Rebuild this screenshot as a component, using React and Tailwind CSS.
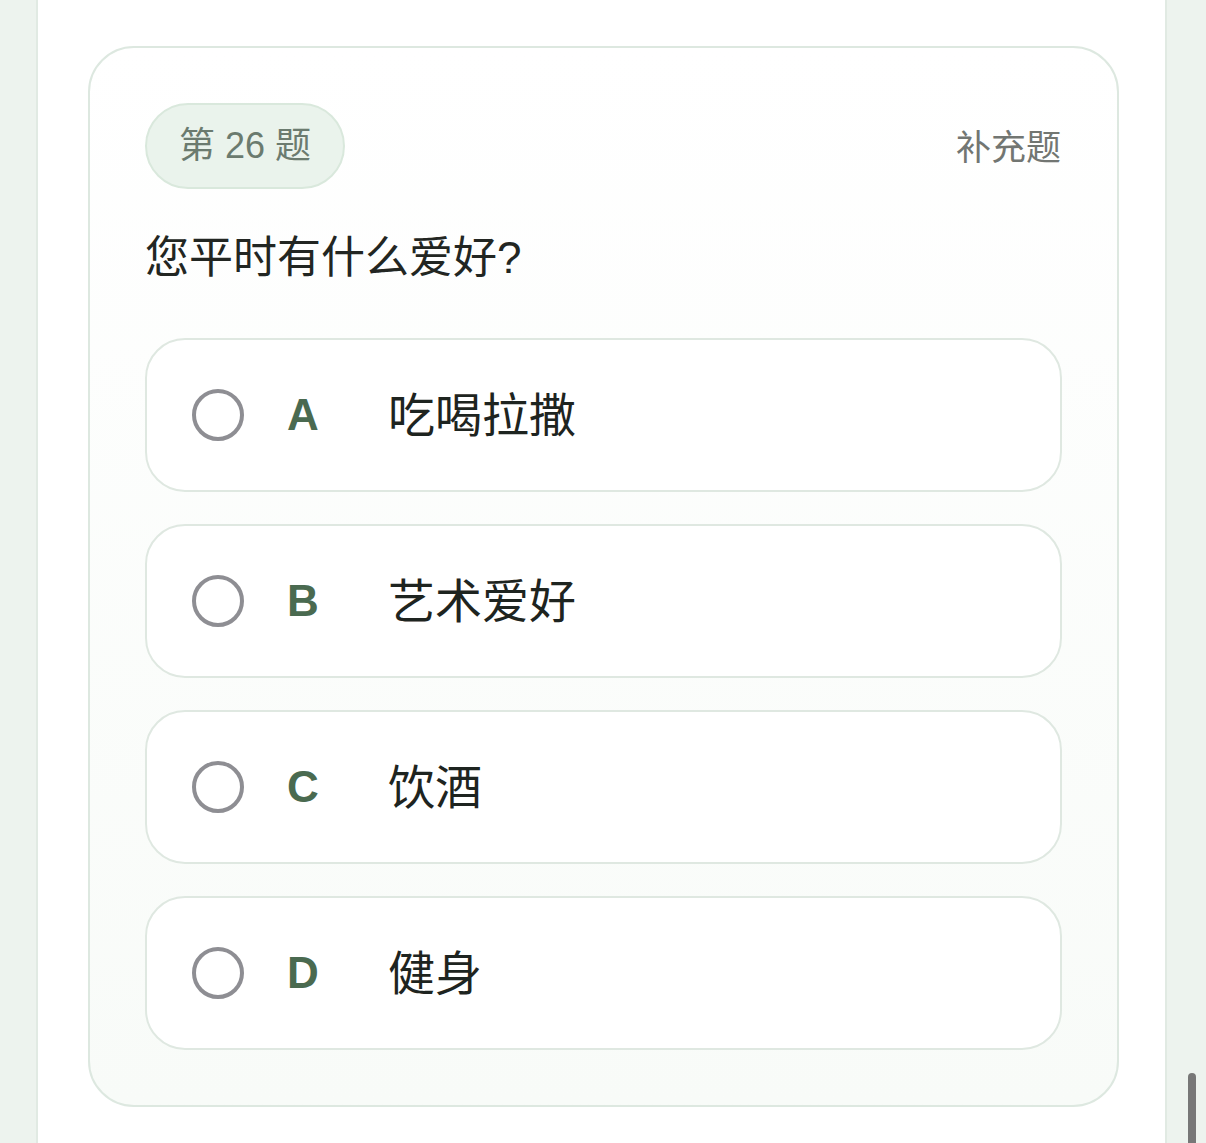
import React from "react";

const options = [
  { key: "A", label: "吃喝拉撒" },
  { key: "B", label: "艺术爱好" },
  { key: "C", label: "饮酒" },
  { key: "D", label: "健身" },
];

/* ─── Option Row ─────────────────────────────────────────────── */
function OptionRow({ letter, label }) {
  return (
    <div className="h-[154px] bg-white rounded-[40px] border-2 border-[#dfe8e1] flex items-center pl-[45px]">
      <span className="w-[52px] h-[52px] rounded-full border-[4px] border-[#8e8e93] shrink-0" />
      <span className="ml-[43px] w-[101px] shrink-0 text-[44px] font-bold leading-none text-[#4a6a50]">
        {letter}
      </span>
      <span className="text-[47px] leading-none text-[#1e2420]">{label}</span>
    </div>
  );
}

/* ─── Page ───────────────────────────────────────────────────── */
export default function App() {
  return (
    <div
      className="relative min-h-screen h-[1143px] overflow-hidden bg-[#edf3ee] pl-[36px] pr-[39px]"
      style={{ fontFamily: '"Liberation Sans", "Noto Sans CJK SC", sans-serif' }}
    >
      <div className="h-full bg-white border-x-2 border-[#e1eae3] pl-[50px] pr-[46px] pt-[46px]">
        {/* Question card */}
        <div className="rounded-[46px] border-2 border-[#dde8e0] bg-gradient-to-b from-white to-[#f8fbf8] pl-[55px] pr-[55px] pt-[55px] pb-[55px]">
          <div className="flex items-center justify-between">
            <div className="h-[86px] w-[200px] rounded-full bg-[#eaf3ec] border-2 border-[#d9e8dc] flex items-center justify-center text-[36px] text-[#6b7b6f]">
              第 26 题
            </div>
            <span className="text-[35px] text-[#727672] mt-[4px] mr-[1px]">补充题</span>
          </div>

          <h2 className="mt-[36px] text-[44px] leading-[66px] font-normal text-[#222622]">
            您平时有什么爱好?
          </h2>

          <div className="mt-[47px] flex flex-col gap-[32px]">
            {options.map(o => (
              <OptionRow key={o.key} letter={o.key} label={o.label} />
            ))}
          </div>
        </div>
      </div>

      {/* Overlay scrollbar */}
      <div className="absolute left-[1188px] top-[1073px] w-[8px] h-[100px] rounded-full bg-[#777777]" />
    </div>
  );
}
